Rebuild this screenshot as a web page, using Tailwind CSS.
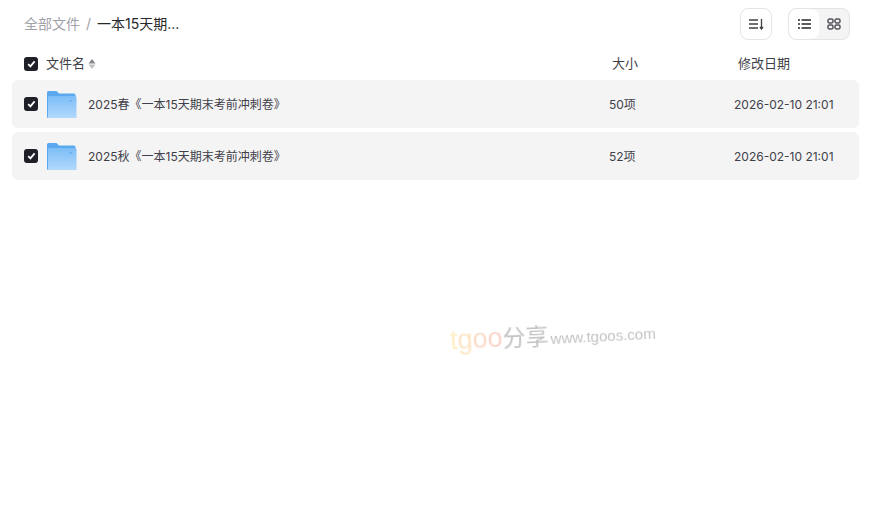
<!DOCTYPE html>
<html lang="zh">
<head>
  <meta charset="UTF-8" />
  <title>全部文件</title>
  <script src="https://cdn.jsdelivr.net/npm/@tailwindcss/browser@4"></script>
</head>
<body class="bg-white font-['Inter','Noto_Sans_CJK_SC',sans-serif] text-[#3f3f4a]">
  <div class="relative h-[514px] w-[874px] overflow-hidden">
    <!-- top bar -->
    <div class="flex h-12 items-center justify-between pl-6 pr-6">
      <div class="flex items-center text-sm">
        <span class="text-[#a1a1aa]">全部文件</span>
        <span class="mx-[6px] text-[#a1a1aa]">/</span>
        <span class="text-[#27272a]">一本15天期...</span>
      </div>
      <div class="flex items-center gap-4">
        <button class="flex h-8 w-8 items-center justify-center rounded-lg border border-[#e4e4e7] bg-white">
          <svg width="15" height="12" viewBox="0 0 15 12" fill="none" stroke="#3f3f46" stroke-width="1.3">
            <path d="M0 2h9M0 6h9M0 10h9M12.500 1v10" />
            <path d="M11 9l1.500 2 1.500-2" />
          </svg>
        </button>
        <div class="flex h-8 w-[62px] overflow-hidden rounded-lg border border-[#e4e4e7] bg-[#f4f4f5]">
          <div class="flex w-[30px] items-center justify-center rounded-lg bg-white">
            <svg width="13" height="10" viewBox="0 0 13 10" fill="none" stroke="#27272a" stroke-width="1.300">
              <path d="M0 1h2M3.500 1H13M0 5h2M3.500 5H13M0 9h2M3.500 9H13" />
            </svg>
          </div>
          <div class="flex flex-1 items-center justify-center">
            <svg width="14" height="12" viewBox="0 0 14 12" fill="none" stroke="#52525b" stroke-width="1.5">
              <rect x="1" y="1" width="5" height="4" rx="1.4" />
              <rect x="8" y="1" width="5" height="4" rx="1.4" />
              <rect x="1" y="7" width="5" height="4" rx="1.4" />
              <rect x="8" y="7" width="5" height="4" rx="1.4" />
            </svg>
          </div>
        </div>
      </div>
    </div>

    <!-- table header -->
    <div class="flex h-8 items-center text-[13px]">
      <div class="flex w-[612px] items-center pl-6">
        <span class="flex h-[14px] w-[14px] items-center justify-center rounded-[3px] bg-[#1f1f27]">
          <svg width="9" height="8" viewBox="0 0 9 8" fill="none" stroke="white" stroke-width="1.8"><path d="M1.2 4.2 3.4 6.4 7.6 1.4" /></svg>
        </span>
        <span class="ml-2">文件名</span>
        <svg class="ml-[3px]" width="8" height="12" viewBox="0 0 8 12"><path d="M4 1 7.500 5.500H.5z" fill="#85858c" /><path d="M4 11 .5 6.500h7z" fill="#c0c0c5" /></svg>
      </div>
      <div class="w-[126px]">大小</div>
      <div>修改日期</div>
    </div>

    <!-- rows -->
    <div class="ml-3 flex w-[847px] flex-col gap-1 text-xs">
      <div class="flex h-12 items-center rounded-md bg-[#f4f4f4] pl-3">
        <span class="flex h-[14px] w-[14px] items-center justify-center rounded-[3px] bg-[#1f1f27]">
          <svg width="9" height="8" viewBox="0 0 9 8" fill="none" stroke="white" stroke-width="1.8"><path d="M1.2 4.2 3.4 6.4 7.6 1.4" /></svg>
        </span>
        <svg class="ml-[9px] mt-px" width="30" height="27" viewBox="0 0 30 27">
          <defs>
            <linearGradient id="folderFront" x1="0" y1="0" x2="0" y2="1">
              <stop offset="0" stop-color="#7cbdf7" />
              <stop offset="1" stop-color="#b2d9fc" />
            </linearGradient>
          </defs>
          <path d="M0 1.500A1.500 1.500 0 0 1 1.500 0h8l2.500 2.500h15a1.500 1.500 0 0 1 1.500 1.500v2H0z" fill="#5aa9ee" />
          <path d="M0 5h28A1.500 1.500 0 0 1 29.500 6.500V27H1a1 1 0 0 1-1-1z" fill="url(#folderFront)" />
          <path d="M0 2v24.500h1V2z" fill="#5aa9ee" />
          <rect x="22" y="9" width="3" height="1.500" fill="#68b0f0" />
        </svg>
        <span class="ml-[11px] w-[521px] pt-px">2025春《一本15天期末考前冲刺卷》</span>
        <span class="w-[125px] pt-px">50项</span>
        <span class="pt-px">2026-02-10 21:01</span>
      </div>
      <div class="flex h-12 items-center rounded-md bg-[#f4f4f4] pl-3">
        <span class="flex h-[14px] w-[14px] items-center justify-center rounded-[3px] bg-[#1f1f27]">
          <svg width="9" height="8" viewBox="0 0 9 8" fill="none" stroke="white" stroke-width="1.8"><path d="M1.2 4.2 3.4 6.4 7.6 1.4" /></svg>
        </span>
        <svg class="ml-[9px] mt-px" width="30" height="27" viewBox="0 0 30 27">
          <path d="M0 1.500A1.500 1.500 0 0 1 1.500 0h8l2.500 2.500h15a1.500 1.500 0 0 1 1.500 1.500v2H0z" fill="#5aa9ee" />
          <path d="M0 5h28A1.500 1.500 0 0 1 29.500 6.500V27H1a1 1 0 0 1-1-1z" fill="url(#folderFront)" />
          <path d="M0 2v24.500h1V2z" fill="#5aa9ee" />
          <rect x="22" y="9" width="3" height="1.500" fill="#68b0f0" />
        </svg>
        <span class="ml-[11px] w-[521px] pt-px">2025秋《一本15天期末考前冲刺卷》</span>
        <span class="w-[125px] pt-px">52项</span>
        <span class="pt-px">2026-02-10 21:01</span>
      </div>
    </div>

    <!-- watermark -->
    <div class="absolute left-[450px] top-[319px] flex -rotate-3 items-baseline whitespace-nowrap font-['Liberation_Sans','Noto_Sans_CJK_SC',sans-serif] opacity-70 blur-[0.4px]">
      <span class="text-[27px] leading-8"><span class="text-[#fde9b0]">t</span><span class="text-[#fcdcae]">g</span><span class="text-[#fbcdb4]">o</span><span class="text-[#f9c3b5]">o</span></span>
      <span class="text-[23px] leading-8 text-[#a8a8a8]">分享</span>
      <span class="ml-[2px] text-[15px] leading-8 text-[#a8a8a8]">www.tgoos.com</span>
    </div>
  </div>
</body>
</html>
